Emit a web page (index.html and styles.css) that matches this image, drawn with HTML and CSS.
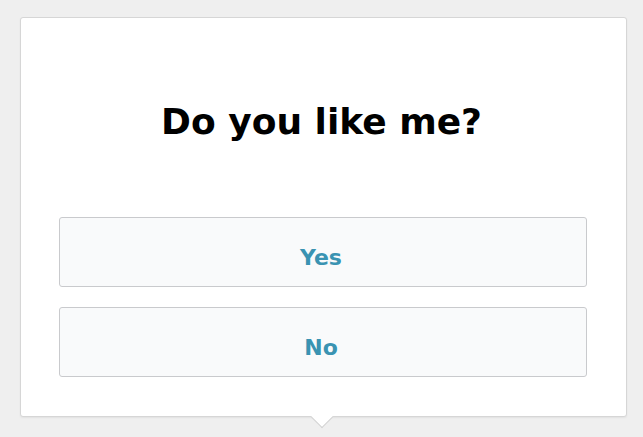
FILE: index.html
```html
<!DOCTYPE html>
<html>
<head>
<meta charset="utf-8">
<link rel="stylesheet" href="styles.css">
</head>
<body>
<div class="card">
  <h1 class="title">Do you like me?</h1>
  <div class="choices">
    <button class="choice">Yes</button>
    <button class="choice">No</button>
  </div>
  <span class="pointer"></span>
</div>
</body>
</html>
```
FILE: styles.css
```css
html, body {
  margin: 0;
  padding: 0;
}
body {
  background: #efefef;
  font-family: "DejaVu Sans", sans-serif;
  padding: 17px 0 0 20px;
  height: 437px;
  box-sizing: border-box;
}
.card {
  position: relative;
  width: 607px;
  height: 400px;
  box-sizing: border-box;
  background: #ffffff;
  border: 1px solid #d6d6d6;
  border-radius: 3px;
  box-shadow: 0 1px 2px rgba(0,0,0,0.06);
  padding: 0 39px 39px 38px;
  display: flex;
  flex-direction: column;
}
.title {
  margin: 0;
  height: 199px;
  box-sizing: border-box;
  padding: 8px 3px 0 0;
  display: flex;
  align-items: center;
  justify-content: center;
  font-size: 36px;
  font-weight: bold;
  color: #000;
}
.choices {
  display: flex;
  flex-direction: column;
  gap: 20px;
}
.choice {
  height: 70px;
  box-sizing: border-box;
  border: 1px solid #c9cacd;
  border-radius: 3px;
  background: #f9fafb;
  font-family: "DejaVu Sans", sans-serif;
  font-weight: bold;
  font-size: 22px;
  color: #3a93b2;
  padding: 10px 4px 0 0;
  cursor: pointer;
}
.pointer {
  position: absolute;
  left: 293px;
  bottom: -9px;
  width: 15px;
  height: 15px;
  background: #ffffff;
  border-right: 1px solid #d0d0d0;
  border-bottom: 1px solid #d0d0d0;
  transform: rotate(45deg);
}
```
